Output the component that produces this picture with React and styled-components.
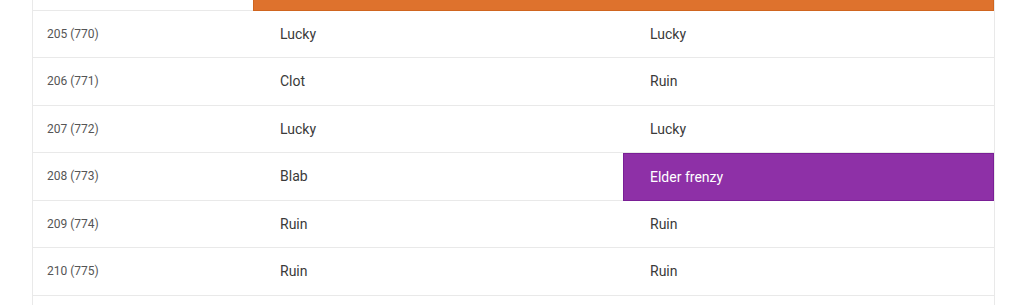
import React from "react";
import styled, { createGlobalStyle } from "styled-components";

const Global = createGlobalStyle`
  html, body {
    margin: 0;
    padding: 0;
    background: #fff;
    font-family: Roboto, "Noto Sans", Arial, sans-serif;
  }
`;

const Page = styled.div`
  height: 305px;
  overflow: hidden;
  padding: 0 32px;
`;

const Table = styled.div`
  width: 963px;
  margin-top: -37px;
  border-left: 1px solid #e9e9e9;
  border-right: 1px solid #e9e9e9;
  box-sizing: border-box;
`;

const Row = styled.div`
  display: grid;
  grid-template-columns: 220px 370px 1fr;
  height: 47.5px;
  box-sizing: border-box;
  border-bottom: 1px solid #e9e9e9;
`;

const Cell = styled.div`
  display: flex;
  align-items: center;
  padding-left: ${(p) => (p.$first ? "14px" : "27px")};
  font-size: ${(p) => (p.$first ? "12px" : "14px")};
  color: ${(p) => (p.$first ? "#555" : "#3a3a3a")};
  grid-column: ${(p) => (p.$span ? `span ${p.$span}` : "auto")};
  background: ${(p) => p.$bg || "transparent"};
  box-shadow: ${(p) => (p.$edge ? `inset 0 0 0 1px ${p.$edge}` : "none")};
  ${(p) => p.$bg && "color: #fff; margin-bottom: -1px;"}
`;

const rows = [
  ["205 (770)", "Lucky", "Lucky"],
  ["206 (771)", "Clot", "Ruin"],
  ["207 (772)", "Lucky", "Lucky"],
  ["208 (773)", "Blab", "Elder frenzy", true],
  ["209 (774)", "Ruin", "Ruin"],
  ["210 (775)", "Ruin", "Ruin"],
  ["", "", ""],
];

export default function App() {
  return (
    <Page>
      <Global />
      <Table>
        <Row>
          <Cell $first />
          <Cell $span={2} $bg="#de722d" $edge="#d0651f" />
        </Row>
        {rows.map(([id, a, b, hl], i) => (
          <Row key={i}>
            <Cell $first>{id}</Cell>
            <Cell>{a}</Cell>
            {hl ? (
              <Cell $bg="#8e30a7" $edge="#7a1f96">
                {b}
              </Cell>
            ) : (
              <Cell>{b}</Cell>
            )}
          </Row>
        ))}
      </Table>
    </Page>
  );
}
